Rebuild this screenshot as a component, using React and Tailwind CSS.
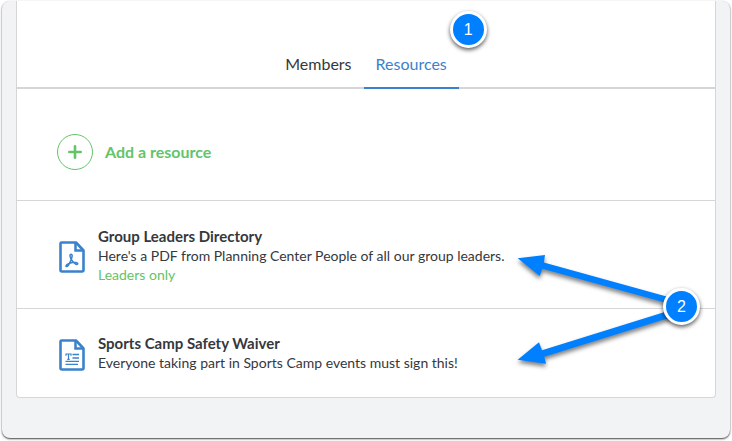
import React from "react";

function PdfIcon() {
  return (
    <svg className="mt-1" width="26" height="32" viewBox="0 0 26 32" fill="none" stroke="#3b82cc" aria-hidden="true">
      <path d="M2.5 1.5H17L24.5 9.5V29Q24.5 30.5 23 30.5H3Q1.5 30.5 1.5 29V2.5Q1.5 1.5 2.5 1.5Z" strokeWidth="2.6" strokeLinejoin="round" />
      <path d="M16.5 2V9.5H24" strokeWidth="2.5" />
      <path d="M12.2 13.3c-1.8 0-1.3 2.3-.2 4.5.9 1.7 2.3 3.6 4 4.9 1.3 1 2.7.9 2.8 0 .1-1.3-2.8-1.5-5.3-1.1-2.3.3-6.2 1.7-6.5 3.2-.2 1.2 1.4 1 2.5-.8 1.2-1.9 2.6-4.6 3.3-7.2.5-2 .5-3.5-.6-3.5Z" strokeWidth="1.5" />
    </svg>
  );
}

function TextIcon() {
  return (
    <svg className="mt-1" width="26" height="32" viewBox="0 0 26 32" fill="none" stroke="#3b82cc" aria-hidden="true">
      <path d="M2.5 1.5H17L24.5 9.5V29Q24.5 30.5 23 30.5H3Q1.5 30.5 1.5 29V2.5Q1.5 1.5 2.5 1.5Z" strokeWidth="2.6" strokeLinejoin="round" />
      <path d="M16.5 2V9.5H24" strokeWidth="2.5" />
      <path d="M7 16.8V15H12V16.8M9.5 15V20.3M8.3 20.3H10.7" strokeWidth="1.2" />
      <path d="M13.5 15.5H20M13.5 19H20M6.5 22.3H20M6.5 25.3H19" strokeWidth="1.3" />
    </svg>
  );
}

function Marker({ children, className }) {
  return (
    <span
      className={
        "absolute flex size-[37px] items-center justify-center rounded-full border-3 border-white bg-[#0080ff] font-['Liberation_Sans',Arial,sans-serif] text-base text-white shadow-[0_2px_4px_rgba(0,0,0,0.65)] " +
        className
      }
    >
      {children}
    </span>
  );
}

function Arrows() {
  return (
    <svg
      className="absolute -top-[66px] right-10 drop-shadow-[0_3px_2px_rgba(0,0,0,0.5)]"
      width="165"
      height="130"
      viewBox="510 240 165 130"
      fill="#0080ff"
      aria-hidden="true"
    >
      <path d="M517.7 258.3L545 255L543.9 262.5L672 298V304.5L542.3 268.7L539.7 276Z" />
      <path d="M517.7 359.7L539 342.3L542 350.3L672 309.8V317L544.3 356.7L546 363.7Z" />
    </svg>
  );
}

function Resource({ icon, title, description, note, className }) {
  return (
    <li className={"flex items-center gap-3 pr-10 pl-[42px] " + className}>
      {icon}
      <div className="pl-px">
        <h2 className="text-[15px] leading-5 font-bold">
          <a href="#resource">{title}</a>
        </h2>
        <p className="text-sm leading-5">{description}</p>
        {note && <p className="text-sm leading-[18px] text-[#63c468]">{note}</p>}
      </div>
    </li>
  );
}

export default function App() {
  return (
    <div className="bg-white px-0.5 pt-px pb-[3px] font-[Lato,sans-serif] text-[#35383d]">
      <main className="rounded-lg bg-[#f1f3f5] px-3.5 pb-10 shadow-[0_1px_2px_rgba(0,0,0,0.75)]">
        <div className="rounded-b-sm border-x border-b border-[#d5d6d8] bg-white">
          <nav className="flex justify-center border-b-2 border-[#d5d5d5] pt-[46px]" aria-label="Group">
            <a href="#members" className="-mb-0.5 border-b-2 border-transparent px-3 pt-[5px] pb-[11px] text-base leading-6">
              Members
            </a>
            <a
              href="#resources"
              aria-current="page"
              className="relative -mb-0.5 border-b-2 border-[#3b82cc] px-3 pt-[5px] pb-[11px] text-base leading-6 text-[#3b82cc]"
            >
              Resources
              <Marker className="-top-9 -right-7">1</Marker>
            </a>
          </nav>
          <div className="flex border-b border-[#d5d6d8] px-10 pt-[45px] pb-[30px]">
            <button type="button" className="flex items-center gap-3 text-base font-bold text-[#63c468]">
              <span className="flex size-9 items-center justify-center rounded-full border border-[#63c468]">
                <svg width="14" height="14" viewBox="0 0 14 14" stroke="currentColor" strokeWidth="2.6" strokeLinecap="round" aria-hidden="true">
                  <path d="M7 1.3V12.7M1.3 7H12.7" />
                </svg>
              </span>
              Add a resource
            </button>
          </div>
          <div className="relative">
            <ul>
              <Resource
                icon={<PdfIcon />}
                title="Group Leaders Directory"
                description="Here's a PDF from Planning Center People of all our group leaders."
                note="Leaders only"
                className="border-b border-[#d5d6d8] pt-[25px] pb-6"
              />
              <Resource
                icon={<TextIcon />}
                title="Sports Camp Safety Waiver"
                description="Everyone taking part in Sports Camp events must sign this!"
                className="py-6"
              />
            </ul>
            <div className="absolute top-[105px] right-0">
              <Arrows />
              <Marker className="-top-[18px] right-[15px]">2</Marker>
            </div>
          </div>
        </div>
      </main>
    </div>
  );
}
